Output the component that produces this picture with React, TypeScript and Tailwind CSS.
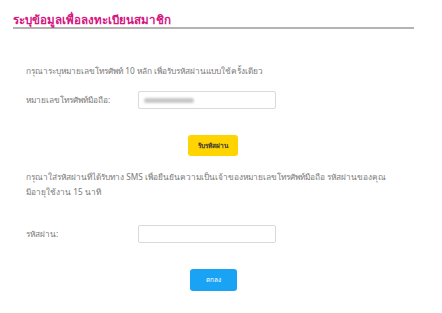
export default function App() {
  return (
    <div className="w-[442px] h-[313px] bg-white font-['Noto_Sans','DejaVu_Sans',sans-serif] text-[#7a7a7a]">
      <div className="pt-[14px] px-[13px]">
        {/* Header */}
        <div className="w-[401px] border-b-2 border-[#b3b3b3] pb-[1px]">
          <h1 className="text-[11.6px] leading-[12px] font-bold text-[#d4147f]">ระบุข้อมูลเพื่อลงทะเบียนสมาชิก</h1>
        </div>

        <div className="pl-[13px]">
          <p className="mt-[37px] text-[8.3px] leading-[10px]">
            กรุณาระบุหมายเลขโทรศัพท์ 10 หลัก เพื่อรับรหัสผ่านแบบใช้ครั้งเดียว
          </p>

          <div className="mt-[15px] flex items-center">
            <label className="w-[112px] text-[8.3px]">หมายเลขโทรศัพท์มือถือ:</label>
            <div className="w-[138px] h-[18px] border border-[#d9d9d9] rounded-[2px] flex items-center px-[5px]">
              <div className="w-[50px] h-[5px] bg-[#c8c8c8] rounded blur-[1px]" />
            </div>
          </div>

          <div className="mt-[26px] flex">
            <button className="ml-[162px] w-[50px] h-[21px] bg-[#ffd400] rounded-[3px] text-[6.5px] font-bold text-[#333]">
              รับรหัสผ่าน
            </button>
          </div>

          <p className="mt-[13px] w-[375px] text-[8.3px] leading-[15px]">
            กรุณาใส่รหัสผ่านที่ได้รับทาง SMS เพื่อยืนยันความเป็นเจ้าของหมายเลขโทรศัพท์มือถือ รหัสผ่านของคุณ มีอายุใช้งาน 15 นาที
          </p>

          <div className="mt-[26px] flex items-center">
            <label className="w-[112px] text-[8.3px]">รหัสผ่าน:</label>
            <div className="w-[138px] h-[18px] border border-[#d9d9d9] rounded-[2px]" />
          </div>

          <div className="mt-[26px] flex">
            <button className="ml-[164px] w-[47px] h-[22px] bg-[#1aa3f5] rounded-[3px] text-[6.5px] text-white">
              ตกลง
            </button>
          </div>
        </div>
      </div>
    </div>
  )
}
